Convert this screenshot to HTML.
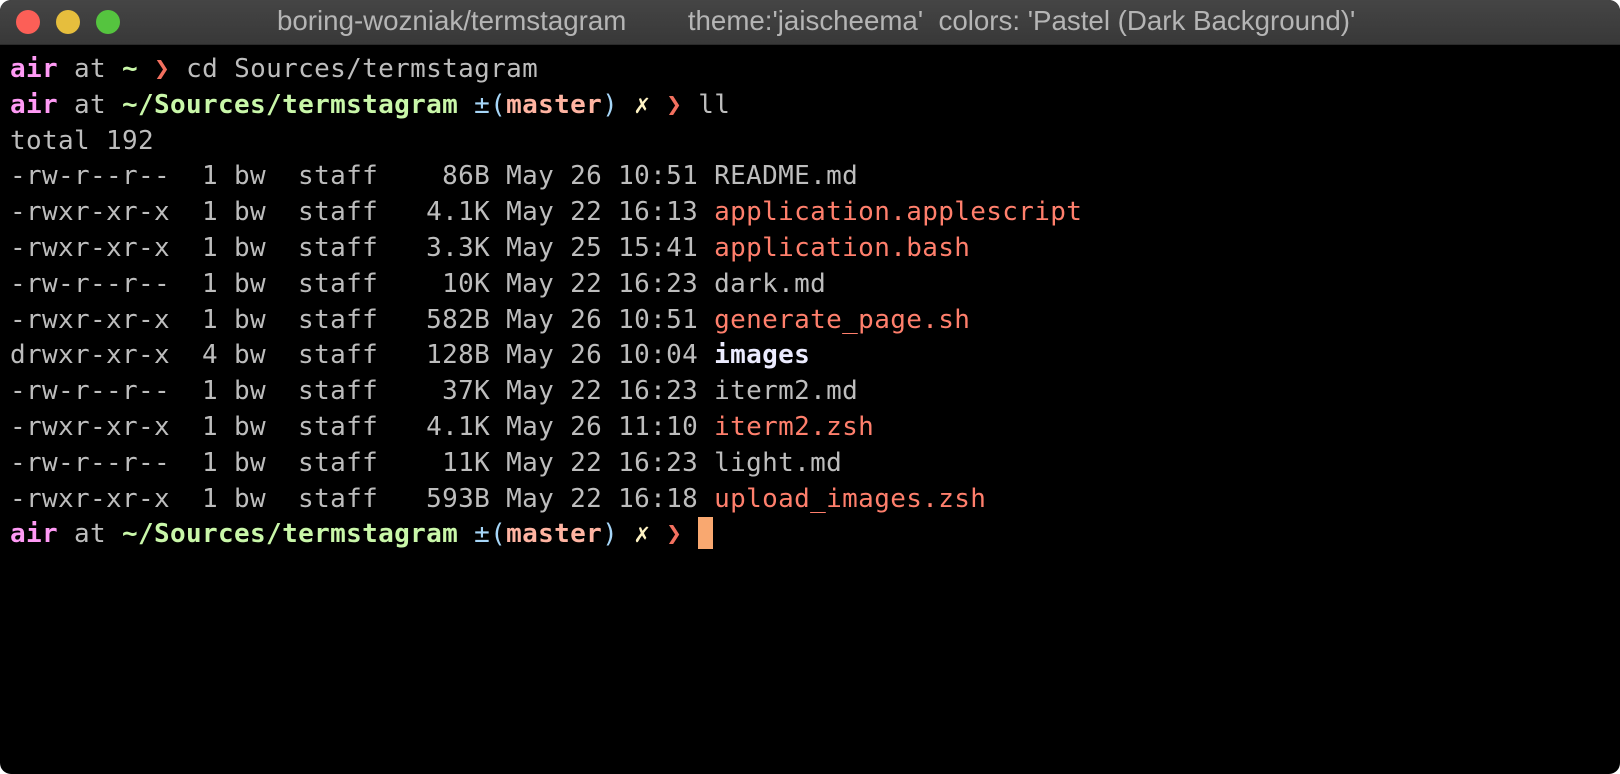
<!DOCTYPE html>
<html><head><meta charset="utf-8"><style>
html,body{margin:0;padding:0;background:#fff;width:1620px;height:774px;overflow:hidden}
.win{position:absolute;left:0;top:0;width:1620px;height:774px;background:#000;border-radius:11px;overflow:hidden}
.bar{position:absolute;left:0;top:0;width:1620px;height:44px;background:linear-gradient(#454545,#383838);border-bottom:1px solid #2a2a2a}
.dot{position:absolute;top:10px;width:24px;height:24px;border-radius:50%}
.title{position:absolute;top:5px;left:277px;font:27.7px "Liberation Sans",sans-serif;color:#b5b5b5;white-space:pre}
pre{position:absolute;left:10px;top:52px;margin:0;font-family:"DejaVu Sans Mono","Liberation Mono",monospace;font-size:26px;letter-spacing:0.35px;line-height:35.8px;color:#bdbdbd}
.p{color:#ff9af5;font-weight:bold}.g{color:#c9f7a9;font-weight:bold}.b{color:#a6d6f8}.m{color:#ffb4a2;font-weight:bold}
.x{color:#fff3c4}.a{color:#f2705f}.e{color:#ff7f6c}.d{color:#ececff;font-weight:bold}
.cur{display:inline-block;width:15px;height:32px;background:#f9a870;vertical-align:-7px}
</style></head><body><div class="win">
<div class="bar">
<div class="dot" style="left:16px;background:#fc5f57"></div>
<div class="dot" style="left:56px;background:#e6be3d"></div>
<div class="dot" style="left:96px;background:#55c43f"></div>
<div class="title">boring-wozniak/termstagram        theme:'jaischeema'  colors: 'Pastel (Dark Background)'</div>
</div>
<pre><span class="p">air</span> at <span class="g">~</span> <span class="a">❯</span> cd Sources/termstagram
<span class="p">air</span> at <span class="g">~/Sources/termstagram</span> <span class="b">±(</span><span class="m">master</span><span class="b">)</span> <span class="x">✗</span> <span class="a">❯</span> ll
total 192
-rw-r--r--  1 bw  staff    86B May 26 10:51 README.md
-rwxr-xr-x  1 bw  staff   4.1K May 22 16:13 <span class="e">application.applescript</span>
-rwxr-xr-x  1 bw  staff   3.3K May 25 15:41 <span class="e">application.bash</span>
-rw-r--r--  1 bw  staff    10K May 22 16:23 dark.md
-rwxr-xr-x  1 bw  staff   582B May 26 10:51 <span class="e">generate_page.sh</span>
drwxr-xr-x  4 bw  staff   128B May 26 10:04 <span class="d">images</span>
-rw-r--r--  1 bw  staff    37K May 22 16:23 iterm2.md
-rwxr-xr-x  1 bw  staff   4.1K May 26 11:10 <span class="e">iterm2.zsh</span>
-rw-r--r--  1 bw  staff    11K May 22 16:23 light.md
-rwxr-xr-x  1 bw  staff   593B May 22 16:18 <span class="e">upload_images.zsh</span>
<span class="p">air</span> at <span class="g">~/Sources/termstagram</span> <span class="b">±(</span><span class="m">master</span><span class="b">)</span> <span class="x">✗</span> <span class="a">❯</span> <span class="cur"></span></pre>
</div></body></html>
